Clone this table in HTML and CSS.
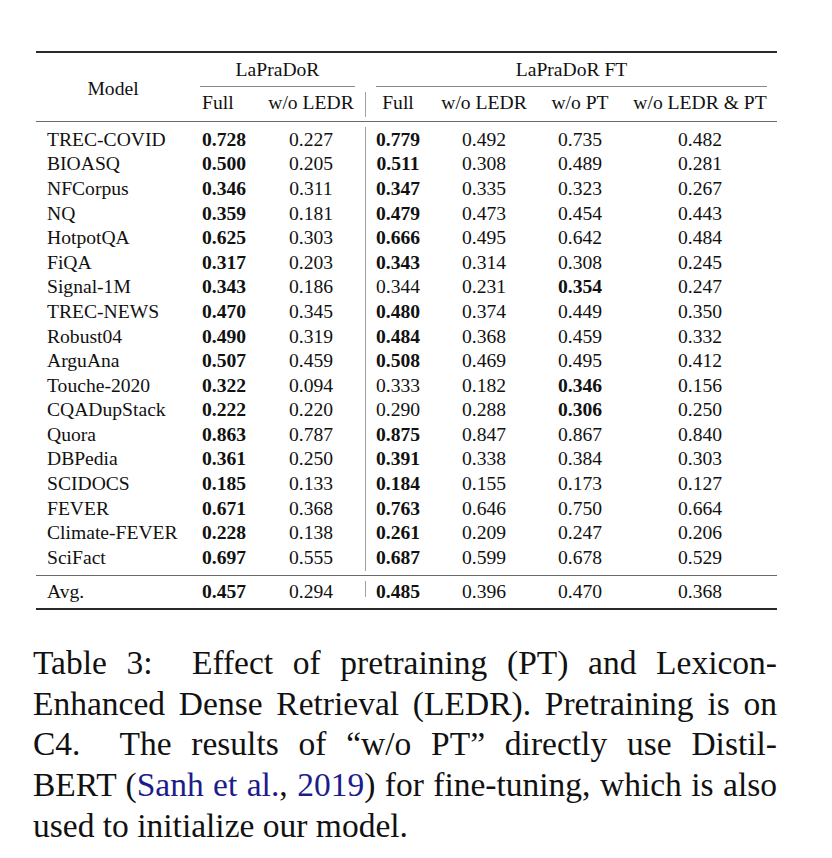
FILE: index.html
```html
<!DOCTYPE html>
<html lang="en">
<head>
<meta charset="utf-8">
<title>Table 3</title>
<link rel="stylesheet" href="styles.css">
</head>
<body>
<div class="page">
  <table class="results">
    <colgroup>
      <col class="c-model"><col class="c-full"><col class="c-ledr"><col class="c-ftfull"><col class="c-ftledr"><col class="c-ftpt"><col class="c-ftboth">
    </colgroup>
    <thead>
      <tr class="row-group">
        <th rowspan="2" class="model-head">Model</th>
        <th colspan="2" class="group"><div class="cmid cmid-a">LaPraDoR</div></th>
        <th colspan="4" class="group"><div class="cmid cmid-b">LaPraDoR FT</div></th>
      </tr>
      <tr class="row-sub">
        <th class="left">Full</th>
        <th>w/o LEDR</th>
        <th class="bar">Full</th>
        <th>w/o LEDR</th>
        <th>w/o PT</th>
        <th>w/o LEDR &amp; PT</th>
      </tr>
    </thead>
    <tbody class="body">
      <tr class="first"><td class="name">TREC-COVID</td><td class="left b">0.728</td><td>0.227</td><td class="bar b">0.779</td><td>0.492</td><td>0.735</td><td>0.482</td></tr>
      <tr><td class="name">BIOASQ</td><td class="left b">0.500</td><td>0.205</td><td class="bar b">0.511</td><td>0.308</td><td>0.489</td><td>0.281</td></tr>
      <tr><td class="name">NFCorpus</td><td class="left b">0.346</td><td>0.311</td><td class="bar b">0.347</td><td>0.335</td><td>0.323</td><td>0.267</td></tr>
      <tr><td class="name">NQ</td><td class="left b">0.359</td><td>0.181</td><td class="bar b">0.479</td><td>0.473</td><td>0.454</td><td>0.443</td></tr>
      <tr><td class="name">HotpotQA</td><td class="left b">0.625</td><td>0.303</td><td class="bar b">0.666</td><td>0.495</td><td>0.642</td><td>0.484</td></tr>
      <tr><td class="name">FiQA</td><td class="left b">0.317</td><td>0.203</td><td class="bar b">0.343</td><td>0.314</td><td>0.308</td><td>0.245</td></tr>
      <tr><td class="name">Signal-1M</td><td class="left b">0.343</td><td>0.186</td><td class="bar">0.344</td><td>0.231</td><td class="b">0.354</td><td>0.247</td></tr>
      <tr><td class="name">TREC-NEWS</td><td class="left b">0.470</td><td>0.345</td><td class="bar b">0.480</td><td>0.374</td><td>0.449</td><td>0.350</td></tr>
      <tr><td class="name">Robust04</td><td class="left b">0.490</td><td>0.319</td><td class="bar b">0.484</td><td>0.368</td><td>0.459</td><td>0.332</td></tr>
      <tr><td class="name">ArguAna</td><td class="left b">0.507</td><td>0.459</td><td class="bar b">0.508</td><td>0.469</td><td>0.495</td><td>0.412</td></tr>
      <tr><td class="name">Touche-2020</td><td class="left b">0.322</td><td>0.094</td><td class="bar">0.333</td><td>0.182</td><td class="b">0.346</td><td>0.156</td></tr>
      <tr><td class="name">CQADupStack</td><td class="left b">0.222</td><td>0.220</td><td class="bar">0.290</td><td>0.288</td><td class="b">0.306</td><td>0.250</td></tr>
      <tr><td class="name">Quora</td><td class="left b">0.863</td><td>0.787</td><td class="bar b">0.875</td><td>0.847</td><td>0.867</td><td>0.840</td></tr>
      <tr><td class="name">DBPedia</td><td class="left b">0.361</td><td>0.250</td><td class="bar b">0.391</td><td>0.338</td><td>0.384</td><td>0.303</td></tr>
      <tr><td class="name">SCIDOCS</td><td class="left b">0.185</td><td>0.133</td><td class="bar b">0.184</td><td>0.155</td><td>0.173</td><td>0.127</td></tr>
      <tr><td class="name">FEVER</td><td class="left b">0.671</td><td>0.368</td><td class="bar b">0.763</td><td>0.646</td><td>0.750</td><td>0.664</td></tr>
      <tr><td class="name">Climate-FEVER</td><td class="left b">0.228</td><td>0.138</td><td class="bar b">0.261</td><td>0.209</td><td>0.247</td><td>0.206</td></tr>
      <tr class="last"><td class="name">SciFact</td><td class="left b">0.697</td><td>0.555</td><td class="bar b">0.687</td><td>0.599</td><td>0.678</td><td>0.529</td></tr>
    </tbody>
    <tbody class="avg">
      <tr><td class="name">Avg.</td><td class="left b">0.457</td><td>0.294</td><td class="bar b">0.485</td><td>0.396</td><td>0.470</td><td>0.368</td></tr>
    </tbody>
  </table>

  <div class="caption">
    <div class="line">Table&nbsp;3:&nbsp; Effect of pretraining (PT) and Lexicon-</div>
    <div class="line">Enhanced Dense Retrieval (LEDR). Pretraining is on</div>
    <div class="line">C4.&nbsp; The results of “w/o PT” directly use Distil-</div>
    <div class="line">BERT (<a class="cite" href="#">Sanh et al.</a>, <a class="cite" href="#">2019</a>) for fine-tuning, which is also</div>
    <div class="line end">used to initialize our model.</div>
  </div>
</div>
</body>
</html>
```

FILE: styles.css
```css
html, body {
  margin: 0;
  padding: 0;
  background: #ffffff;
}

.page {
  padding-top: 51px;
  font-family: "Liberation Serif", "Times New Roman", serif;
  color: #111;
}

.results {
  margin-left: 36px;
  width: 741px;
  table-layout: fixed;
  border-collapse: separate;
  border-spacing: 0;
  border-top: 2px solid #2a2a2a;
  border-bottom: 2px solid #2a2a2a;
  font-size: 19.6px;
}

.c-model { width: 154px; }
.c-full { width: 67px; }
.c-ledr { width: 108px; }
.c-ftfull { width: 66px; }
.c-ftledr { width: 106px; }
.c-ftpt { width: 86px; }
.c-ftboth { width: 154px; }

.results th,
.results td {
  padding: 0;
  line-height: 24.6px;
  text-align: center;
  font-weight: normal;
  white-space: nowrap;
}

.results .left {
  text-align: left;
  padding-left: 12px;
}

.results .name {
  text-align: left;
  padding-left: 11px;
}

.results .b {
  font-weight: bold;
}

/* header */
.row-group th {
  padding-top: 4.8px;
}

.cmid {
  padding-bottom: 3.6px;
  border-bottom: 1px solid #8a8a8a;
}

.cmid-a { margin: 0 10px 0 10px; }
.cmid-b { margin: 0 10px 0 11px; }

.model-head {
  vertical-align: middle;
  border-bottom: 1px solid #6a6a6a;
}

.row-sub th {
  padding-top: 4.1px;
  padding-bottom: 5.3px;
  border-bottom: 1px solid #6a6a6a;
}

.row-sub th.bar {
  background: linear-gradient(#a0a0a0, #a0a0a0) 0 5px / 1px 25px no-repeat;
}

/* body */
.body td.bar {
  background: linear-gradient(#a0a0a0, #a0a0a0) 0 0 / 1px 100% no-repeat;
}

.body tr.first td {
  padding-top: 5.8px;
}

.body tr.first td.bar {
  background-position: 0 4.7px;
  background-size: 1px calc(100% - 4.7px);
}

.body tr.last td {
  padding-bottom: 4.4px;
}

.body tr.last td.bar {
  background-position: 0 0;
  background-size: 1px 25px;
}

.avg td {
  border-top: 1px solid #6a6a6a;
  padding-top: 4px;
  padding-bottom: 3.4px;
}

.avg td.bar {
  background: linear-gradient(#a0a0a0, #a0a0a0) 0 5px / 1px 16px no-repeat;
}

/* caption */
.caption {
  margin: 33px 0 0 33px;
  width: 744px;
  font-size: 33.5px;
  line-height: 40.8px;
  color: #111;
}

.caption .line {
  text-align: justify;
  text-align-last: justify;
  white-space: nowrap;
}

.caption .line.end {
  text-align: left;
  text-align-last: left;
}

.cite {
  color: #1c1c8c;
  text-decoration: none;
}
```
